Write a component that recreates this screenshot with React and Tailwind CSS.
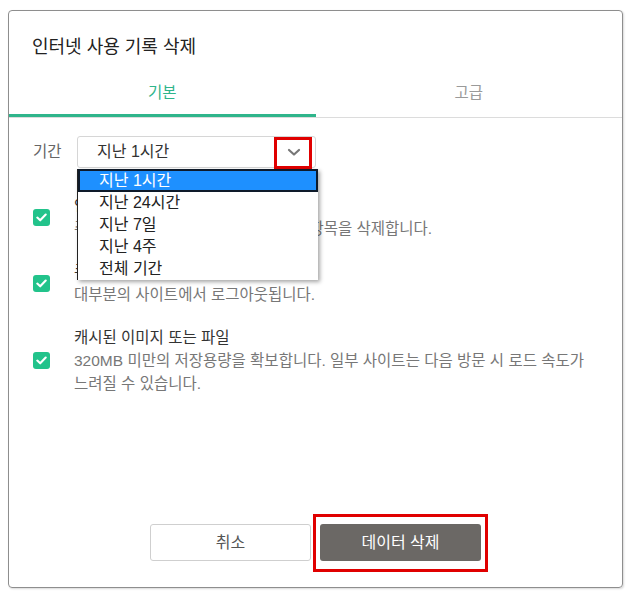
const items = [
  {
    title: "인터넷 사용 기록",
    desc: ["주소창에서 자동 완성을 포함한 모든 항목을 삭제합니다."],
  },
  {
    title: "쿠키 및 기타 사이트 데이터",
    desc: ["대부분의 사이트에서 로그아웃됩니다."],
  },
  {
    title: "캐시된 이미지 또는 파일",
    desc: [
      "320MB 미만의 저장용량을 확보합니다. 일부 사이트는 다음 방문 시 로드 속도가",
      "느려질 수 있습니다.",
    ],
  },
];

const options = ["지난 1시간", "지난 24시간", "지난 7일", "지난 4주", "전체 기간"];

const CheckBox = () => (
  <div className="w-[17px] h-[17px] shrink-0 rounded-[3px] bg-[#22c38b] flex items-center justify-center">
    <svg width="11" height="9" viewBox="0 0 11 9" fill="none">
      <path d="M1.3 4.6 L4.2 7.3 L9.7 1.5" stroke="white" strokeWidth="2.1" strokeLinecap="round" strokeLinejoin="round" />
    </svg>
  </div>
);

export default function App() {
  return (
    <div className="w-[631px] h-[593px] bg-white pt-[10px] pl-[8px] font-['Liberation_Sans','Noto_Sans_CJK_KR',sans-serif]">
      <div className="w-[615px] h-[578px] border border-[#8e8e8e] rounded-[4px] shadow-[1px_1px_2px_rgba(0,0,0,0.15)] flex flex-col">
        <div className="pt-[24px] pl-[23px] text-[18px] leading-[24px] text-[#222]">
          인터넷 사용 기록 삭제
        </div>

        <div className="mt-[12px] flex border-b border-[#dcdcdc]">
          <div className="flex-1 h-[46px] flex items-center justify-center text-[15.5px] text-[#2fb58b] border-b-[3px] border-[#2fb58b] mb-[-1px]">
            기본
          </div>
          <div className="flex-1 h-[46px] flex items-center justify-center text-[15.5px] text-[#9a9a9a] pb-[3px]">
            고급
          </div>
        </div>

        <div className="mt-[18px] flex items-center pl-[24px]">
          <div className="w-[44px] text-[15.5px] text-[#666]">기간</div>
          <div className="relative w-[239px] h-[32px] border border-[#d6d6d6] rounded-[3px] flex items-center justify-between pl-[19px] pr-[14px]">
            <span className="text-[16px] text-[#333]">지난 1시간</span>
            <svg width="14" height="9" viewBox="0 0 14 9" fill="none">
              <path d="M2 2 L7 6.5 L12 2" stroke="#777" strokeWidth="2.2" strokeLinecap="round" strokeLinejoin="round" />
            </svg>
            <div className="absolute left-[196px] top-0 w-[38px] h-[32px] border-[3px] border-[#e00000]" />

            <div className="absolute left-[-1px] top-[32px] w-[241px] bg-white border-l border-[#222] shadow-[2px_2px_4px_rgba(0,0,0,0.35)] z-10">
              {options.map((o, i) => (
                <div
                  key={o}
                  className={
                    i === 0
                      ? "h-[23px] bg-[#1e90ff] border-2 border-[#0e1a2a] text-white pl-[19px] text-[16px] leading-[19px]"
                      : "h-[22px] text-[#222] pl-[21px] text-[16px] leading-[22px]"
                  }
                >
                  {o}
                </div>
              ))}
            </div>
          </div>
        </div>

        <div className="mt-[26px] flex flex-col gap-[20px]">
          {items.map((it) => (
            <div key={it.title} className="flex items-center pl-[24px]">
              <CheckBox />
              <div className="ml-[24px] text-[15.5px] leading-[23px]">
                <div className="text-[#333]">{it.title}</div>
                {it.desc.map((d) => (
                  <div key={d} className="text-[#777] whitespace-nowrap">
                    {d}
                  </div>
                ))}
              </div>
            </div>
          ))}
        </div>

        <div className="mt-auto mb-[26px] flex justify-center gap-[9px]">
          <button className="w-[161px] h-[37px] border border-[#cfcfcf] rounded-[3px] bg-white text-[16px] text-[#555]">
            취소
          </button>
          <div className="relative">
            <button className="w-[161px] h-[37px] rounded-[3px] bg-[#6b6865] text-[16px] text-white">
              데이터 삭제
            </button>
            <div className="absolute left-[-7px] right-[-7px] top-[-10px] bottom-[-11px] border-[3px] border-[#e00000]" />
          </div>
        </div>
      </div>
    </div>
  );
}
